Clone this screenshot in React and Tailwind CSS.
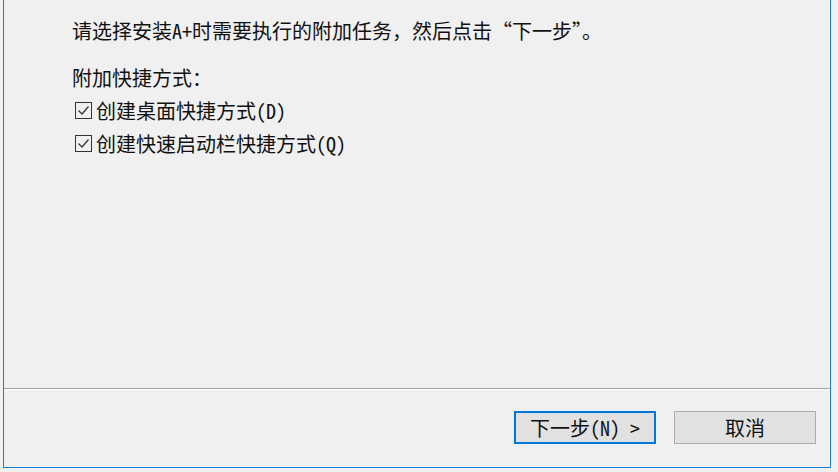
import React from "react";

const font = { fontFamily: '"Noto Sans Mono CJK SC", "Noto Sans CJK SC", "Noto Sans", sans-serif' };

function CheckBox() {
  return (
    <svg width="17" height="17" viewBox="0 0 17 17" className="shrink-0">
      <rect x="0.5" y="0.5" width="16" height="16" fill="none" stroke="#333333" strokeWidth="1" />
      <path d="M3.5 8.5 L7 12 L13.5 4.5" fill="none" stroke="#333333" strokeWidth="1.2" />
    </svg>
  );
}

export default function App() {
  return (
    <div
      className="w-[838px] h-[472px] bg-[#f0f0f0] text-[#111111] overflow-hidden"
      style={font}
    >
      <div className="ml-[3px] w-[828px] h-[468px] border-l border-r border-b border-[#1580d8] flex flex-col">
        <div className="h-[388px] pl-[68px] pt-[17px] text-[20px] font-light">
          <div className="h-[28px] leading-[28px]">请选择安装A+时需要执行的附加任务，然后点击“下一步”。</div>
          <div className="mt-[16px] h-[33px] flex items-center">附加快捷方式：</div>
          <div className="h-[33px] flex items-center pl-[3px] gap-[4px]">
            <CheckBox />
            <span>创建桌面快捷方式(D)</span>
          </div>
          <div className="h-[33px] flex items-center pl-[3px] gap-[4px]">
            <CheckBox />
            <span>创建快速启动栏快捷方式(Q)</span>
          </div>
        </div>
        <div className="border-t border-[#a0a0a0]" />
        <div className="border-t border-white" />
        <div className="flex-1 flex justify-end items-start pt-[21px] pr-[14px] gap-[18px] text-[20px] font-light">
          <button className="w-[142px] h-[33px] border-2 border-[#0078d7] bg-[#e1e1e1] flex items-center justify-center leading-none">
            下一步(N) &gt;
          </button>
          <button className="w-[142px] h-[33px] border border-[#adadad] bg-[#e1e1e1] flex items-center justify-center leading-none">
            取消
          </button>
        </div>
      </div>
    </div>
  );
}
